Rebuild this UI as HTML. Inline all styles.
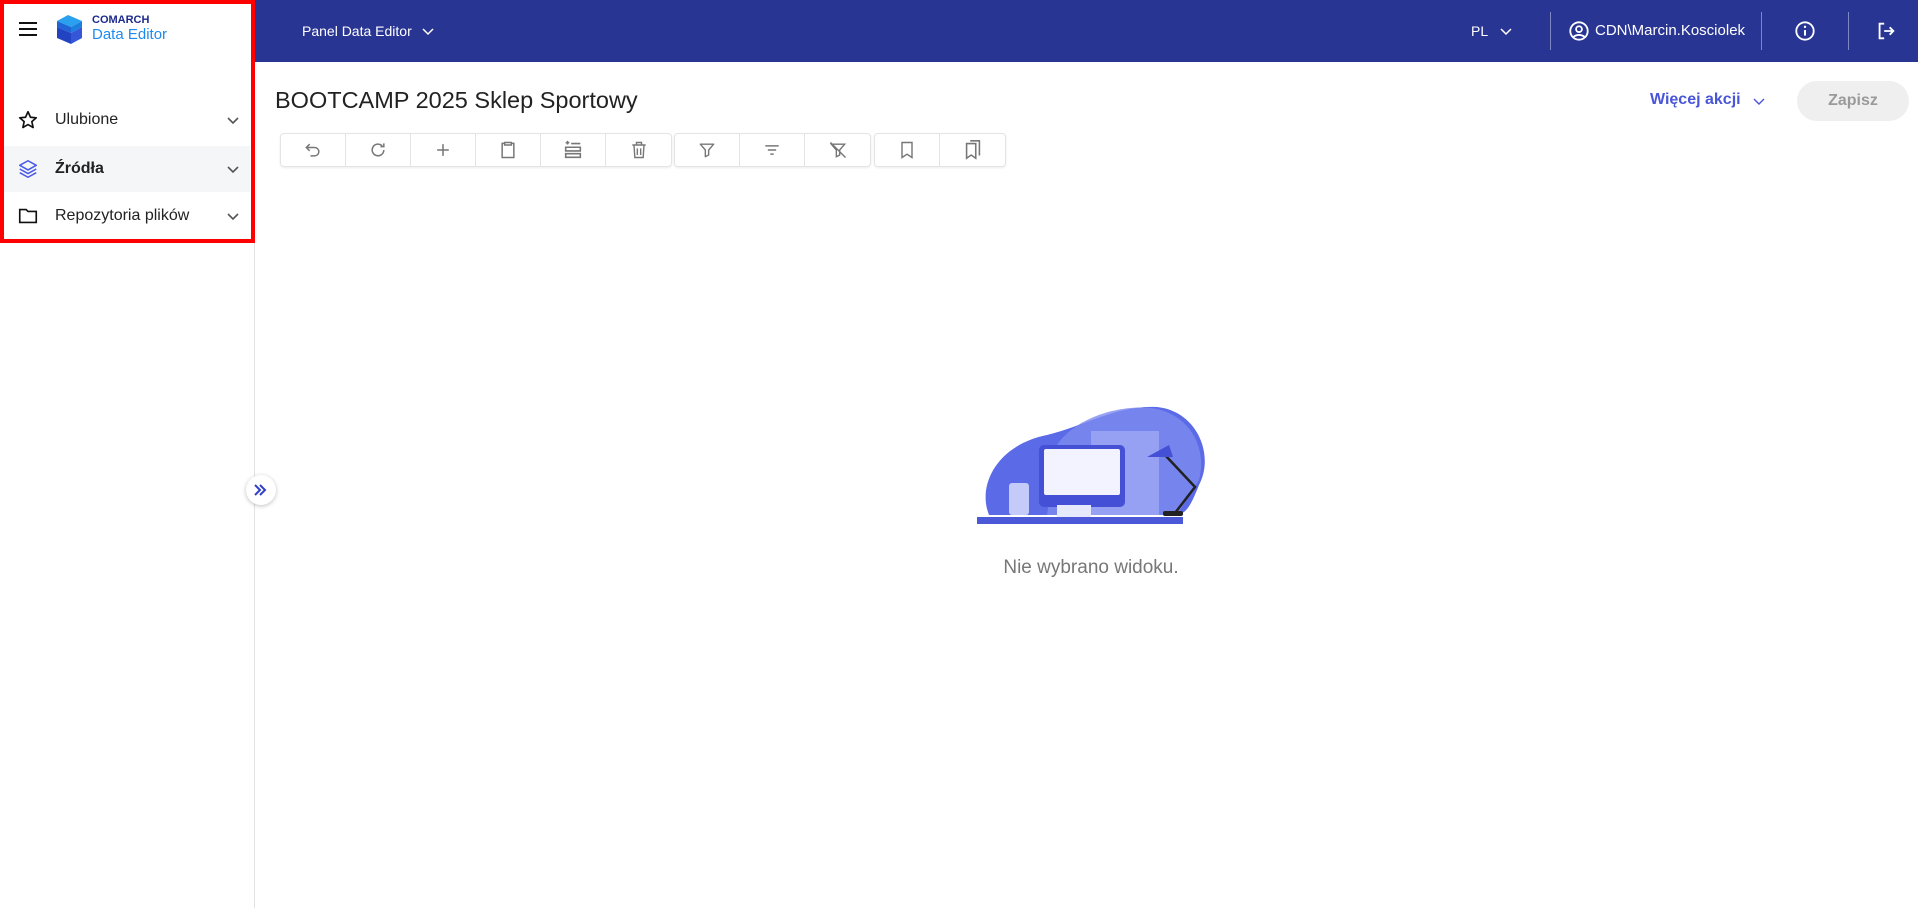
<!DOCTYPE html>
<html><head><meta charset="utf-8"><style>
*{box-sizing:border-box;margin:0;padding:0}
body{width:1918px;height:908px;overflow:hidden;background:#fff;font-family:"Liberation Sans",sans-serif;position:relative;color:#222}
.abs{position:absolute}
#side{left:0;top:0;width:255px;height:908px;border-right:1px solid #e2e2e2;background:#fff}
#red{left:0;top:0;width:255px;height:243px;border:4px solid #f00;z-index:5}
#hdr{left:255px;top:0;width:1663px;height:62px;background:#293593;color:#fff}
.row{position:absolute;left:4px;width:246px;height:46px;display:flex;align-items:center;font-size:16px}
.row svg.i{position:absolute;left:13px}
.row span{position:absolute;left:51px}
.row svg.c{position:absolute;left:222px}
.tb{position:absolute;top:133px;height:34px;border:1px solid #e4e4e4;border-radius:4px;display:flex;box-shadow:0 1px 2px rgba(0,0,0,.08)}
.tb div{width:65px;height:32px;border-right:1px solid #e4e4e4;display:flex;align-items:center;justify-content:center}
.tb div:last-child{border-right:none}
.vd{position:absolute;top:12px;width:1px;height:38px;background:#7f88c4}
</style></head><body>
<div id="side" class="abs"></div>
<div id="red" class="abs"></div>
<svg class="abs" style="left:17px;top:20px" width="22" height="18" viewBox="0 0 22 18"><path d="M2 3h18M2 9h18M2 15h18" stroke="#111" stroke-width="2"/></svg>
<svg class="abs" style="left:55px;top:14px" width="30" height="31" viewBox="0 0 30 31"><path d="M2 7L13 1l14 6-11 6z" fill="#2aa0ee"/><path d="M2 7l14 6v6L2 13z" fill="#1e64d6"/><path d="M2 13l14 6v11L2 24z" fill="#2344c2"/><path d="M16 13l11-6v6l-11 6z" fill="#1b7fe0"/><path d="M16 19l11-6v11l-11 6z" fill="#3556d9"/></svg>
<div class="abs" style="left:92px;top:14px;font-size:11px;font-weight:bold;color:#1c2a8c">COMARCH</div>
<div class="abs" style="left:92px;top:26px;font-size:15px;color:#1e8af0">Data Editor</div>
<div class="row" style="top:97px"><svg class="i" width="22" height="22" viewBox="0 0 24 24"><path d="M12 3l2.7 6 6.3.6-4.8 4.2 1.4 6.4L12 17l-5.6 3.2 1.4-6.4L3 9.6 9.3 9z" fill="none" stroke="#111" stroke-width="1.8" stroke-linejoin="round"/></svg><span>Ulubione</span><svg class="c" width="14" height="10" viewBox="0 0 14 10"><path d="M2 3l5 5 5-5" fill="none" stroke="#555" stroke-width="1.6"/></svg></div>
<div class="row" style="top:146px;background:#f5f6f8;font-weight:bold"><svg class="i" width="22" height="22" viewBox="0 0 24 24"><g fill="none" stroke="#4a5ae8" stroke-width="1.7" stroke-linejoin="round"><path d="M12 3l9 5-9 5-9-5z"/><path d="M3 12l9 5 9-5"/><path d="M3 16l9 5 9-5"/></g></svg><span>Źródła</span><svg class="c" width="14" height="10" viewBox="0 0 14 10"><path d="M2 3l5 5 5-5" fill="none" stroke="#555" stroke-width="1.6"/></svg></div>
<div class="row" style="top:193px"><svg class="i" width="22" height="22" viewBox="0 0 24 24"><path d="M3 5h7l2 2h9v12H3z" fill="none" stroke="#111" stroke-width="1.8"/></svg><span>Repozytoria plików</span><svg class="c" width="14" height="10" viewBox="0 0 14 10"><path d="M2 3l5 5 5-5" fill="none" stroke="#555" stroke-width="1.6"/></svg></div>
<div id="hdr" class="abs">
<div class="abs" style="left:47px;top:23px;font-size:14px">Panel Data Editor</div>
<svg class="abs" style="left:166px;top:26px" width="14" height="10" viewBox="0 0 14 10"><path d="M2 3l5 5 5-5" fill="none" stroke="#fff" stroke-width="1.5"/></svg>
<div class="abs" style="left:1216px;top:23px;font-size:14px">PL</div>
<svg class="abs" style="left:1244px;top:26px" width="14" height="10" viewBox="0 0 14 10"><path d="M2 3l5 5 5-5" fill="none" stroke="#fff" stroke-width="1.5"/></svg>
<div class="vd" style="left:1295px"></div>
<svg class="abs" style="left:1313px;top:20px" width="22" height="22" viewBox="0 0 24 24"><g fill="none" stroke="#fff" stroke-width="2"><circle cx="12" cy="12" r="9.5"/><circle cx="12" cy="10" r="3.2"/><path d="M6 18.5c3-3 9-3 12 0"/></g></svg>
<div class="abs" style="left:1340px;top:22px;font-size:15px">CDN\Marcin.Kosciolek</div>
<div class="vd" style="left:1506px"></div>
<svg class="abs" style="left:1539px;top:20px" width="22" height="22" viewBox="0 0 24 24"><circle cx="12" cy="12" r="9.5" fill="none" stroke="#fff" stroke-width="2"/><path d="M12 11v6" stroke="#fff" stroke-width="2.2"/><circle cx="12" cy="7.5" r="1.3" fill="#fff"/></svg>
<div class="vd" style="left:1593px"></div>
<svg class="abs" style="left:1620px;top:20px" width="22" height="22" viewBox="0 0 24 24"><g fill="none" stroke="#fff" stroke-width="2"><path d="M10 4H5v16h5"/><path d="M10 12h10M16 8l4 4-4 4"/></g></svg>
</div>
<div class="abs" style="left:275px;top:87px;font-size:23.5px;color:#222">BOOTCAMP 2025 Sklep Sportowy</div>
<div class="abs" style="left:1650px;top:91px;font-size:16px;color:#4a56d8;font-weight:bold">Więcej akcji</div>
<svg class="abs" style="left:1752px;top:96px" width="14" height="10" viewBox="0 0 14 10"><path d="M2 3l5 5 5-5" fill="none" stroke="#4a56d8" stroke-width="1.4"/></svg>
<div class="abs" style="left:1797px;top:81px;width:112px;height:40px;border-radius:20px;background:#efefef;color:#9a9a9a;font-size:16px;font-weight:bold;text-align:center;line-height:40px">Zapisz</div>
<div class="tb" style="left:280px"><div><svg width="20" height="20" viewBox="0 0 24 24"><path d="M8 5L4 9l4 4M4 9h10a5 5 0 010 10H9" fill="none" stroke="#777" stroke-width="1.8"/></svg></div><div><svg width="20" height="20" viewBox="0 0 24 24"><path d="M19 12a7 7 0 11-2-5M19 4v4h-4" fill="none" stroke="#777" stroke-width="1.8"/></svg></div><div><svg width="20" height="20" viewBox="0 0 24 24"><path d="M12 5v14M5 12h14" stroke="#777" stroke-width="1.8"/></svg></div><div><svg width="20" height="20" viewBox="0 0 24 24"><path d="M8 4H5v17h14V4h-3M8 3h8v3H8z" fill="none" stroke="#777" stroke-width="1.8"/></svg></div><div><svg width="22" height="22" viewBox="0 0 24 24"><path d="M4 4h4M6 2v4M10 5h10M4 9h16v4H4zM4 16h16v4H4z" fill="none" stroke="#777" stroke-width="1.7"/></svg></div><div><svg width="20" height="20" viewBox="0 0 24 24"><path d="M4 6h16M9 6V3h6v3M6 6l1 15h10l1-15M10 10v8M14 10v8" fill="none" stroke="#777" stroke-width="1.7"/></svg></div></div>
<div class="tb" style="left:674px"><div><svg width="20" height="20" viewBox="0 0 24 24"><path d="M4 5h16l-6 7v6l-4 2v-8z" fill="none" stroke="#777" stroke-width="1.7" stroke-linejoin="round"/></svg></div><div><svg width="20" height="20" viewBox="0 0 24 24"><path d="M4 7h16M7 12h10M10 17h4" stroke="#777" stroke-width="1.8"/></svg></div><div><svg width="20" height="20" viewBox="0 0 24 24"><path d="M4 5h16l-6 7v6l-4 2v-8zM3 3l18 18" fill="none" stroke="#777" stroke-width="1.7"/></svg></div></div>
<div class="tb" style="left:874px"><div><svg width="20" height="20" viewBox="0 0 24 24"><path d="M6 3h12v18l-6-4-6 4z" fill="none" stroke="#777" stroke-width="1.7"/></svg></div><div><svg width="22" height="22" viewBox="0 0 24 24"><path d="M5 5h10v16l-5-3.5L5 21zM9 2h10v16" fill="none" stroke="#777" stroke-width="1.7"/></svg></div></div>
<div class="abs" style="left:246px;top:475px;width:30px;height:30px;border-radius:50%;background:#fff;box-shadow:0 1px 4px rgba(0,0,0,.25);z-index:6"></div>
<svg class="abs" style="left:253px;top:483px;z-index:7" width="14" height="14" viewBox="0 0 14 14"><path d="M2 2l5 5-5 5M7 2l5 5-5 5" fill="none" stroke="#3140c8" stroke-width="2"/></svg>
<svg class="abs" style="left:977px;top:405px" width="232" height="124" viewBox="0 0 232 124">
<path d="M12 110C0 80 20 40 70 30C110 20 140 0 180 2C220 6 238 50 222 80C214 100 210 108 200 110z" fill="#5b6ae6"/>
<path d="M80 40C100 10 150 -2 180 4C215 12 230 45 222 75L200 110H70z" fill="#7d8bef" opacity=".8"/>
<rect x="114" y="26" width="68" height="84" fill="#a4aef5" opacity=".7"/>
<rect x="62" y="40" width="86" height="62" rx="5" fill="#4450d6"/>
<rect x="67" y="44" width="76" height="46" rx="2" fill="#f2f3ff"/>
<rect x="80" y="100" width="34" height="14" fill="#e6e8fb"/>
<rect x="32" y="78" width="20" height="32" rx="3" fill="#c5cbf8"/>
<path d="M188 50l30 32-20 26" fill="none" stroke="#222" stroke-width="2.5"/>
<path d="M170 52l22-12 4 12z" fill="#4450d6"/>
<rect x="186" y="106" width="20" height="5" rx="2" fill="#222"/>
<rect x="0" y="112" width="206" height="7" fill="#4b59d8"/>
</svg>
<div class="abs" style="left:991px;top:557px;width:200px;text-align:center;font-size:19px;color:#777">Nie wybrano widoku.</div>
</body></html>
